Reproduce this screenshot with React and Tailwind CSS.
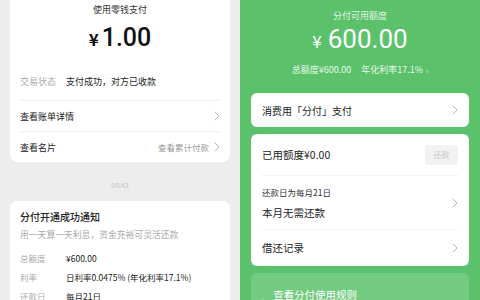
import React from "react";

const font = { fontFamily: '"Noto Sans CJK SC", "Noto Sans", sans-serif' };

function Chevron({ className = "" }) {
  return (
    <svg width="6" height="10" viewBox="0 0 6 10" className={className}>
      <path d="M1 1 L5 5 L1 9" fill="none" stroke="#b5b5b5" strokeWidth="1" strokeLinecap="round" strokeLinejoin="round" />
    </svg>
  );
}

function LeftRow({ label, right }) {
  return (
    <div className="h-[31px] flex items-center justify-between border-t border-[#f0f0f0]">
      <span className="text-[9px] leading-[13px] text-[#222]">{label}</span>
      <div className="flex items-center gap-[5px]">
        {right && <span className="text-[8.5px] leading-[13px] text-[#999]">{right}</span>}
        <Chevron />
      </div>
    </div>
  );
}

function InfoRow({ label, value }) {
  return (
    <div className="h-[19px] flex items-center shrink-0">
      <span className="w-[46px] text-[8.5px] text-[#aaa]">{label}</span>
      <span className="text-[8.5px] text-[#222]">{value}</span>
    </div>
  );
}

export default function App() {
  return (
    <div className="w-[480px] h-[300px] overflow-hidden flex" style={font}>
      {/* Left panel */}
      <div className="w-[240px] h-full bg-[#ededed] pl-[10px] pr-[10px] flex flex-col">
        <div className="shrink-0 bg-white rounded-b-[7px] px-[10px] pt-[3px] h-[162px] flex flex-col">
          <div className="text-center text-[9px] leading-[13px] text-[#333]">使用零钱支付</div>
          <div className="mt-[7px] flex items-baseline justify-center text-[#111] leading-[30px]">
            <span className="text-[17px] font-bold mr-[3px]">¥</span>
            <span className="text-[25px] font-medium" style={{ fontFamily: 'Roboto, "Noto Sans", sans-serif' }}>1.00</span>
          </div>
          <div className="mt-[21px] flex items-center h-[13px]">
            <span className="w-[46px] text-[9px] text-[#aaa]">交易状态</span>
            <span className="text-[9px] text-[#222]">支付成功，对方已收款</span>
          </div>
          <div className="mt-[12px]">
            <LeftRow label="查看账单详情" />
            <LeftRow label="查看名片" right="查看累计付款" />
          </div>
        </div>
        <div className="shrink-0 h-[39px] pt-[18px] text-center leading-[10px] text-[7px] text-[#c2c2c2]">05:43</div>
        <div className="shrink-0 bg-white rounded-t-[7px] h-[120px] px-[10px] pt-[9px]">
          <div className="text-[10px] leading-[14px] font-medium text-[#222]">分付开通成功通知</div>
          <div className="mt-[4px] text-[8.8px] leading-[13px] text-[#aaa]">用一天算一天利息，资金充裕可灵活还款</div>
          <div className="mt-[8px]">
            <InfoRow label="总额度" value="¥600.00" />
            <InfoRow label="利率" value="日利率0.0475% (年化利率17.1%)" />
            <InfoRow label="还款日" value="每月21日" />
          </div>
        </div>
      </div>

      {/* Right panel */}
      <div className="w-[240px] h-full bg-[#5bc26b] pl-[11px] pr-[11px] flex flex-col">
        <div className="shrink-0 text-center text-[9px] leading-[13px] text-white/80 mt-[9px]">分付可用额度</div>
        <div className="shrink-0 flex items-baseline justify-center text-white leading-[30px] mt-[2px]">
          <span className="text-[17px] mr-[6px]">¥</span>
          <span className="text-[26px]" style={{ fontFamily: 'Roboto, "Noto Sans", sans-serif' }}>600.00</span>
        </div>
        <div className="shrink-0 mt-[8px] flex items-center justify-center gap-[10px] text-[9px] leading-[12px] text-white/85">
          <span>总额度¥600.00</span>
          <span className="flex items-center gap-[3px]">年化利率17.1%<span className="text-[7px]">›</span></span>
        </div>

        <div className="shrink-0 mt-[17px] bg-white rounded-[6px] h-[34px] px-[11px] flex items-center justify-between">
          <span className="text-[10px] text-[#222]">消费用「分付」支付</span>
          <Chevron />
        </div>

        <div className="shrink-0 mt-[7px] bg-white rounded-[6px] h-[132px] px-[11px] flex flex-col">
          <div className="h-[42px] flex items-center justify-between border-b border-[#f3f3f3]">
            <span className="text-[10.5px] text-[#222]">已用额度¥0.00</span>
            <span className="w-[33px] h-[20px] rounded-[3px] bg-[#f2f2f2] text-[8px] text-[#c8c8c8] flex items-center justify-center">还款</span>
          </div>
          <div className="h-[54px] flex items-center justify-between border-b border-[#f3f3f3]">
            <div className="flex flex-col">
              <span className="text-[8.5px] leading-[12px] text-[#333]">还款日为每月21日</span>
              <span className="mt-[8px] text-[10.5px] leading-[14px] text-[#222]">本月无需还款</span>
            </div>
            <Chevron />
          </div>
          <div className="flex-1 flex items-center justify-between">
            <span className="text-[10.5px] text-[#222]">借还记录</span>
            <Chevron />
          </div>
        </div>

        <div className="shrink-0 mt-[7px] bg-white/15 rounded-t-[6px] h-[40px] px-[11px] pt-[15px] flex items-start">
          <span className="mt-[6px] mr-[9px] text-[7px] text-white/80">›</span>
          <span className="text-[10.5px] leading-[14px] text-white">查看分付使用规则</span>
        </div>
      </div>
    </div>
  );
}
